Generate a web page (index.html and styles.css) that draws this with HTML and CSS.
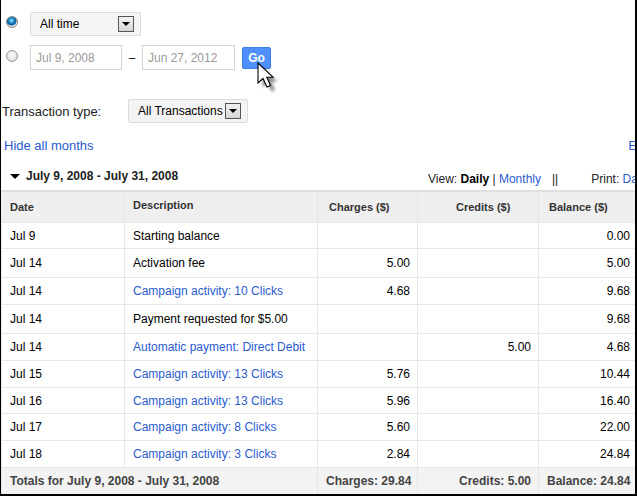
FILE: index.html
```html
<!DOCTYPE html>
<html>
<head>
<meta charset="utf-8">
<link rel="stylesheet" href="styles.css">
</head>
<body>
<div class="frame">
  <div class="page">
    <div class="range">
      <div class="range-row r1">
        <span class="radio on"></span>
        <div class="select sel-time"><span class="sel-label">All time</span><span class="arrow"></span></div>
      </div>
      <div class="range-row r2">
        <span class="radio"></span>
        <div class="input in1">Jul 9, 2008</div>
        <span class="dash">–</span>
        <div class="input in2">Jun 27, 2012</div>
        <div class="go-wrap">
          <button class="go">Go</button>
          <svg class="cursor" width="24" height="32" viewBox="0 0 24 32">
            <defs><filter id="sh" x="-50%" y="-50%" width="200%" height="200%"><feGaussianBlur stdDeviation="1.6"/></filter></defs>
            <path d="M3 3 L3 23 L8 18.5 L12 27 L15.5 25.5 L11.8 17.2 L18 17.2 Z" fill="#000" opacity="0.45" filter="url(#sh)" transform="translate(2.5,2.5)"/>
            <path d="M1 1 L1 21 L6 16.5 L10 25 L13.5 23.5 L9.8 15.2 L16 15.2 Z" fill="#fff" stroke="#000" stroke-width="1.1" stroke-linejoin="miter"/>
          </svg>
        </div>
      </div>
    </div>
    <div class="type-row">
      <span class="type-label">Transaction type:</span>
      <div class="select sel-type"><span class="sel-label">All Transactions</span><span class="arrow"></span></div>
    </div>
    <div class="links-row">
      <a class="link">Hide all months</a>
      <a class="link">E</a>
    </div>
    <div class="month-row">
      <div class="month-title"><span class="tri"></span>July 9, 2008 - July 31, 2008</div>
      <div class="month-tools">
        <span>View: <b>Daily</b> | <a class="link">Monthly</a></span>
        <span class="sep">||</span>
        <span class="print">Print: <a class="link">Da</a></span>
      </div>
    </div>
    <table class="tx">
      <colgroup>
        <col class="c-date"><col class="c-desc"><col class="c-chg"><col class="c-cred"><col class="c-bal">
      </colgroup>
      <thead>
        <tr>
          <th class="h-date">Date</th>
          <th class="h-desc">Description</th>
          <th class="h-chg">Charges ($)</th>
          <th class="h-cred">Credits ($)</th>
          <th class="h-bal">Balance ($)</th>
        </tr>
      </thead>
      <tbody>
        <tr class="rh26"><td>Jul 9</td><td>Starting balance</td><td class="num"></td><td class="num"></td><td class="num">0.00</td></tr>
        <tr class="rh29"><td>Jul 14</td><td>Activation fee</td><td class="num">5.00</td><td class="num"></td><td class="num">5.00</td></tr>
        <tr><td>Jul 14</td><td><a class="link">Campaign activity: 10 Clicks</a></td><td class="num">4.68</td><td class="num"></td><td class="num">9.68</td></tr>
        <tr class="rh29"><td>Jul 14</td><td>Payment requested for $5.00</td><td class="num"></td><td class="num"></td><td class="num">9.68</td></tr>
        <tr><td>Jul 14</td><td><a class="link">Automatic payment: Direct Debit</a></td><td class="num"></td><td class="num">5.00</td><td class="num">4.68</td></tr>
        <tr><td>Jul 15</td><td><a class="link">Campaign activity: 13 Clicks</a></td><td class="num">5.76</td><td class="num"></td><td class="num">10.44</td></tr>
        <tr class="rh26"><td>Jul 16</td><td><a class="link">Campaign activity: 13 Clicks</a></td><td class="num">5.96</td><td class="num"></td><td class="num">16.40</td></tr>
        <tr><td>Jul 17</td><td><a class="link">Campaign activity: 8 Clicks</a></td><td class="num">5.60</td><td class="num"></td><td class="num">22.00</td></tr>
        <tr><td>Jul 18</td><td><a class="link">Campaign activity: 3 Clicks</a></td><td class="num">2.84</td><td class="num"></td><td class="num">24.84</td></tr>
      </tbody>
      <tfoot>
        <tr>
          <td colspan="2">Totals for July 9, 2008 - July 31, 2008</td>
          <td class="num">Charges: 29.84</td>
          <td class="num">Credits: 5.00</td>
          <td class="num">Balance: 24.84</td>
        </tr>
      </tfoot>
    </table>
  </div>
</div>
</body>
</html>
```

FILE: styles.css
```css
html, body {
  margin: 0;
  padding: 0;
  background: #fff;
}
body {
  font-family: "Liberation Sans", Arial, sans-serif;
  font-size: 12px;
  color: #000;
}
.frame {
  width: 637px;
  height: 496px;
  box-sizing: border-box;
  border-left: 1px solid #000;
  border-right: 2px solid #000;
  border-bottom: 2px solid #000;
  overflow: hidden;
}
.page {
  width: 720px;
}
.link {
  color: #2a5bcf;
  text-decoration: none;
}
.range {
  display: flex;
  flex-direction: column;
}
.range-row {
  display: flex;
  align-items: center;
}
.r1 {
  margin-top: 12px;
  height: 24px;
}
.r2 {
  margin-top: 9px;
  height: 25px;
}
.radio {
  width: 12px;
  height: 12px;
  box-sizing: border-box;
  border-radius: 50%;
  margin-left: 5px;
  margin-right: 12px;
  border: 1px solid #999;
  background: radial-gradient(circle at 50% 40%, #fff 0%, #e6e6e6 60%, #cfcfcf 100%);
  align-self: flex-start;
}
.r1 .radio {
  margin-top: 4px;
  border: 1px solid #8a8a8a;
  background: radial-gradient(circle at 45% 35%, #9fe0ff 0%, #1a8fd0 30%, #0a4f8a 55%, #dcdcdc 62%, #f4f4f4 100%);
}
.r2 .radio {
  margin-top: 5px;
}
.select {
  display: flex;
  align-items: center;
  justify-content: space-between;
  box-sizing: border-box;
  height: 24px;
  background: #f4f4f4;
  border: 1px solid #dcdcdc;
  border-radius: 2px;
  padding: 0 6px 0 9px;
  font-size: 12px;
  white-space: nowrap;
}
.sel-time {
  width: 111px;
}
.sel-type {
  width: 120px;
  padding-left: 9px;
  padding-right: 6px;
}
.arrow {
  width: 16px;
  height: 16px;
  box-sizing: border-box;
  border: 1px solid #555;
  background: linear-gradient(#f2f2f2, #d6d6d6);
  position: relative;
  flex: none;
}
.arrow::after {
  content: "";
  position: absolute;
  left: 3px;
  top: 5px;
  border-left: 4px solid transparent;
  border-right: 4px solid transparent;
  border-top: 4px solid #000;
}
.input {
  box-sizing: border-box;
  height: 25px;
  border: 1px solid #d4d4d4;
  display: flex;
  align-items: center;
  padding-left: 5px;
  color: #999;
  font-size: 12px;
}
.in1 {
  width: 92px;
}
.in2 {
  width: 93px;
}
.dash {
  width: 20px;
  text-align: center;
  font-size: 12px;
  color: #222;
}
.go-wrap {
  position: relative;
  margin-left: 7px;
  margin-top: 1px;
}
.go {
  width: 29px;
  height: 22px;
  box-sizing: border-box;
  background: #4d90fe;
  border: 1px solid #3b7de9;
  border-radius: 2px;
  color: #fff;
  font-family: "Liberation Sans", Arial, sans-serif;
  font-size: 12px;
  font-weight: bold;
  padding: 0;
  display: block;
}
.cursor {
  position: absolute;
  left: 15px;
  top: 15px;
}
.type-row {
  display: flex;
  align-items: center;
  margin-top: 29px;
  height: 24px;
}
.type-label {
  margin-left: 1px;
  width: 126px;
  font-size: 13px;
  color: #222;
}
.links-row {
  display: flex;
  justify-content: space-between;
  width: 636px;
  margin-top: 15px;
  font-size: 13px;
  padding-left: 3px;
  box-sizing: border-box;
}
.month-row {
  display: flex;
  align-items: flex-end;
  justify-content: space-between;
  margin-top: 13px;
  height: 24px;
  padding-bottom: 5px;
  box-sizing: border-box;
}
.month-title {
  display: flex;
  align-items: center;
  font-weight: bold;
  font-size: 12px;
  color: #222;
  padding-left: 9px;
  margin-bottom: 2px;
}
.tri {
  width: 0;
  height: 0;
  border-left: 5px solid transparent;
  border-right: 5px solid transparent;
  border-top: 5px solid #000;
  margin-right: 6px;
}
.month-tools {
  display: flex;
  font-size: 12px;
  color: #222;
  width: 293px;
  margin-bottom: -1px;
}
.month-tools b {
  color: #000;
}
.sep {
  margin-left: 11px;
}
.print {
  margin-left: 33px;
}
.tx {
  border-collapse: collapse;
  table-layout: fixed;
  width: 638px;
  margin-left: 0;
}
.c-date { width: 123px; }
.c-desc { width: 193px; }
.c-chg { width: 100px; }
.c-cred { width: 121px; }
.c-bal { width: 101px; }
.tx th, .tx td {
  border: 1px solid #e6e6e6;
  padding: 0 8px;
  text-align: left;
  white-space: nowrap;
}
.tx th {
  background: #efefef;
  height: 30px;
  font-size: 11px;
  font-weight: bold;
  color: #333;
  vertical-align: middle;
  border-top: 2px solid #e0e0e0;
}
.tx th.h-desc {
  vertical-align: top;
  padding-top: 7px;
  box-sizing: border-box;
}
.tx th.h-chg {
  padding-left: 11px;
}
.tx th.h-cred {
  padding-left: 38px;
}
.tx th.h-bal {
  padding-left: 10px;
}
.tx td {
  height: 26px;
  font-size: 12px;
}
.tx tr.rh26 td { height: 25px; }
.tx tr.rh29 td { height: 28px; }
.tx td.num {
  text-align: right;
  padding-right: 7px;
}
.tx td.num:last-child {
  padding-right: 9px;
}
.tx tfoot td {
  background: #f3f3f3;
  font-weight: bold;
  color: #444;
  height: 26px;
}
```
